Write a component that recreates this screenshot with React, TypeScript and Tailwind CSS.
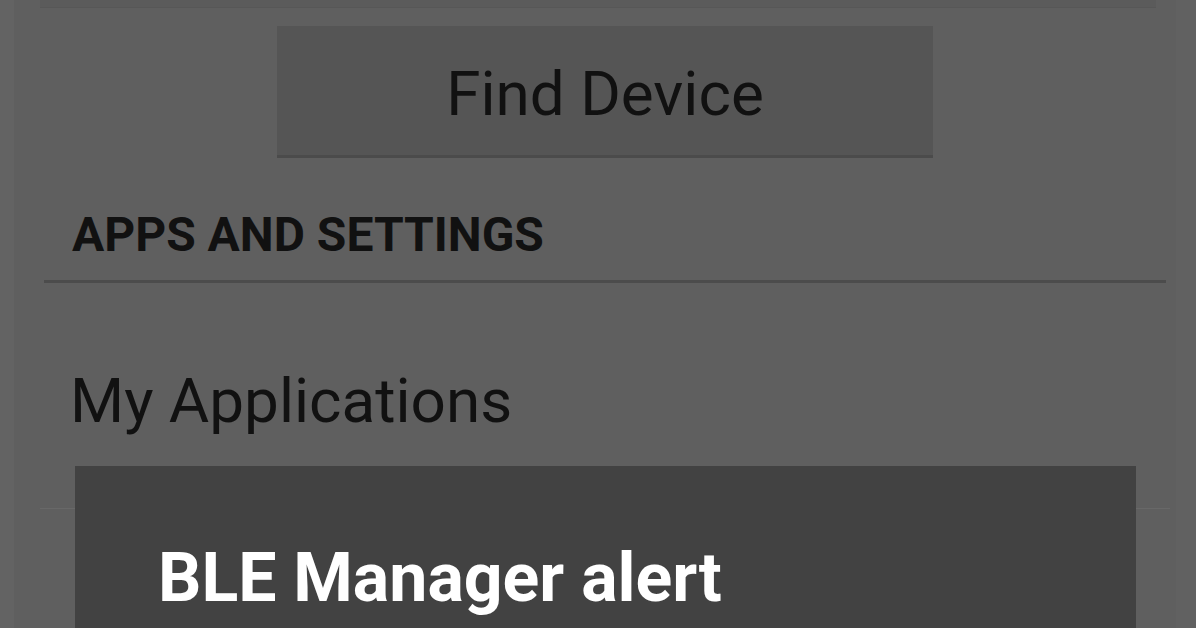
export default function App() {
  return (
    <div className="relative h-[628px] w-[1196px] overflow-hidden bg-[#5f5f5f] font-['Roboto',sans-serif]">
      {/* faint screen edges */}
      <div className="absolute inset-y-0 left-0 w-[14px] bg-[#636363]" />
      <div className="absolute inset-y-0 right-0 w-[20px] bg-[#616161]" />

      <div className="relative">
        <div className="mx-[40px] h-[8px] border-b border-[#575757] bg-[#5b5b5b]" />

        <div className="ml-[277px] mt-[18px] flex h-[132px] w-[656px] items-center justify-center border-b-[3px] border-[#4b4b4b] bg-[#555555] pt-[6px]">
          <span className="text-[62px] leading-none text-[#111]">Find Device</span>
        </div>

        <div className="ml-[72px] mt-[53px] text-[48px] font-bold leading-none text-[#111]">
          APPS AND SETTINGS
        </div>

        <div className="ml-[44px] mr-[30px] mt-[21px] h-[3px] bg-[#4c4c4c]" />

        <div className="ml-[70px] mt-[87px] text-[62px] leading-none text-[#111]">
          My Applications
        </div>

        <div className="relative mt-[34px]">
          <div className="absolute left-[40px] right-[26px] top-[42px] h-px bg-[#686868]" />
          <div className="relative ml-[75px] h-[200px] w-[1061px] bg-[#424242] pl-[83px] pt-[78px]">
            <span className="text-[68px] font-bold leading-none text-white">BLE Manager alert</span>
          </div>
        </div>
      </div>
    </div>
  );
}
